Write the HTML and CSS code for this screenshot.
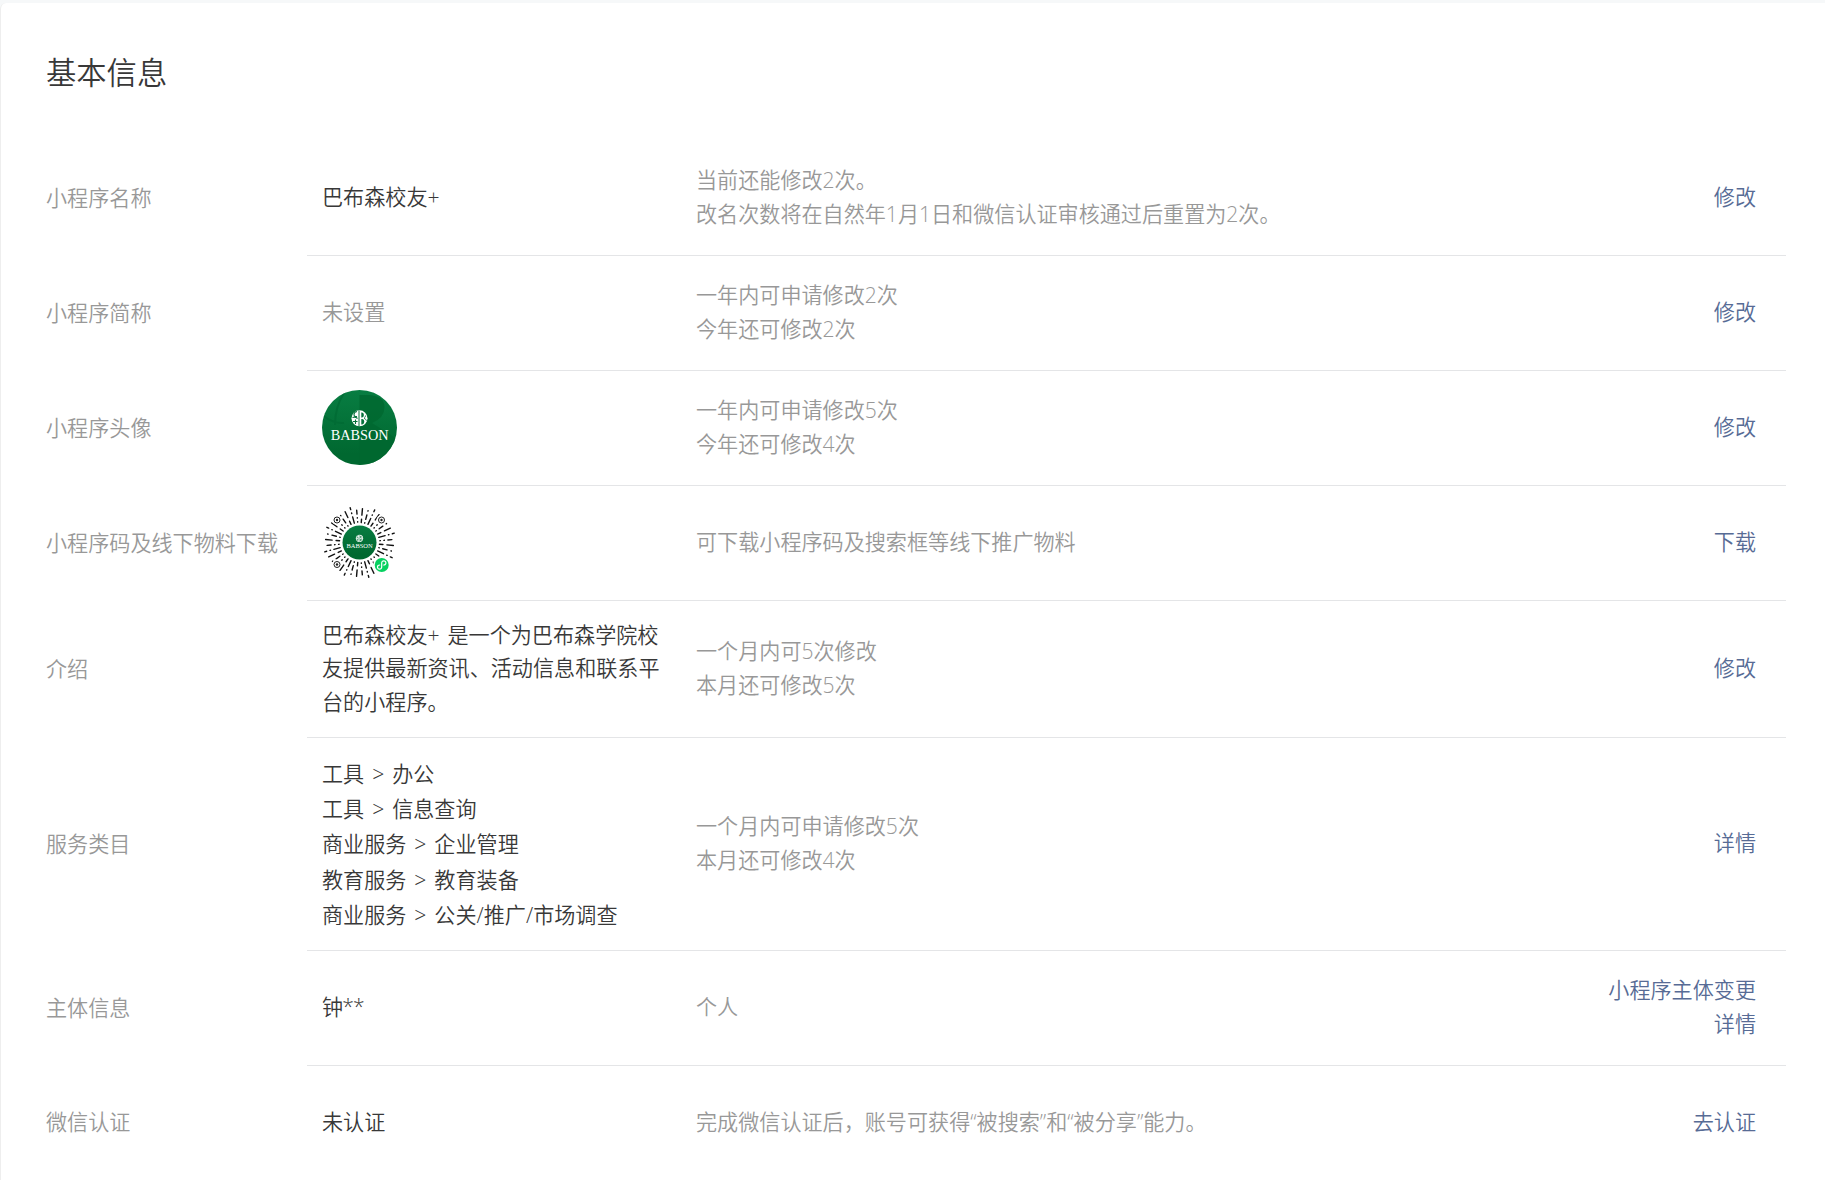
FILE: index.html
```html
<!DOCTYPE html>
<html lang="zh-CN">
<head>
<meta charset="utf-8">
<title>基本信息</title>
<link rel="stylesheet" href="styles.css">
</head>
<body>
<main class="panel">
  <h1 class="title">基本信息</h1>
  <div class="list">
    <div class="row">
      <div class="label">小程序名称</div>
      <div class="body">
        <div class="value">巴布森校友+</div>
        <div class="hint">当前还能修改2次。<br>改名次数将在自然年1月1日和微信认证审核通过后重置为2次。</div>
        <div class="action"><a>修改</a></div>
      </div>
    </div>
    <div class="row">
      <div class="label">小程序简称</div>
      <div class="body">
        <div class="value unset">未设置</div>
        <div class="hint">一年内可申请修改2次<br>今年还可修改2次</div>
        <div class="action"><a>修改</a></div>
      </div>
    </div>
    <div class="row">
      <div class="label">小程序头像</div>
      <div class="body">
        <div class="value">
          <svg class="pic" viewBox="0 0 75 75">
            <defs>
              <linearGradient id="green" x2="0" y2="1">
                <stop offset="0" stop-color="#087d42"/>
                <stop offset=".85" stop-color="#006830"/>
              </linearGradient>
              <clipPath id="round"><circle cx="37.5" cy="37.5" r="37.5"/></clipPath>
              <g id="emblem">
                <circle cx="37.500" cy="28.300" r="8" fill="#fff"/>
                <path d="M37 20.500v15.600" stroke="#04713a" stroke-width="1"/>
                <path d="M35 21.500q-3 .5-3 3t3 2M30.500 27.500q3-1 5 1M31 31.500h4.500M33.500 29.500v4.500" stroke="#04713a" stroke-width="1.100" fill="none"/>
                <path d="M39.300 22.500h.8q1.800.3 1.800 2.500t-1.800 2.500h-.8zM39.300 29h1q2 .4 2 2.700t-2 2.700h-1z" fill="#04713a"/>
                <path d="M43.500 25.500q0 2-1.500 2.800q2 .6 2.500 2.500" stroke="#04713a" stroke-width=".8" fill="none"/>
              </g>
            </defs>
            <g clip-path="url(#round)">
              <rect width="75" height="75" fill="url(#green)"/>
              <path d="M37.500 5h10q15 1 15 12T50 33l25 16V75H37.500z" fill="#006830" opacity=".8"/>
              <path d="M22 3q-9 14-9 32M0 25q12 9 22 8" fill="none" stroke="#006a33" stroke-width="2" opacity=".7"/>
            </g>
            <use href="#emblem"/>
            <text x="8.700" y="49.800" textLength="58" lengthAdjust="spacingAndGlyphs" class="logo-text">BABSON</text>
          </svg>
        </div>
        <div class="hint">一年内可申请修改5次<br>今年还可修改4次</div>
        <div class="action"><a>修改</a></div>
      </div>
    </div>
    <div class="row">
      <div class="label">小程序码及线下物料下载</div>
      <div class="body">
        <div class="value">
          <svg class="pic" viewBox="0 0 75 75">
            <defs>
              <path id="ra" d="M20 0H36" stroke-dasharray="3.500 4 6.500 9"/>
              <path id="rb" d="M20 0H36.500" stroke-dasharray=".5 3.500 4.500 4 .5 3.500"/>
              <path id="rc" d="M20 0H36" stroke-dasharray="6.500 3.500 .5 3.500 2 3"/>
              <path id="rd" d="M20.500 0H35" stroke-dasharray=".5 3.500 .5 3.500 4 3"/>
              <g id="quarter">
                <use href="#ra"/><use href="#rb" transform="rotate(10)"/><use href="#rc" transform="rotate(20)"/>
                <use href="#ra" transform="rotate(30)"/><use href="#rd" transform="rotate(40)"/><use href="#rb" transform="rotate(50)"/>
                <use href="#ra" transform="rotate(60)"/><use href="#rc" transform="rotate(70)"/><use href="#rd" transform="rotate(80)"/>
              </g>
            </defs>
            <g transform="translate(37.500 37.500) rotate(5)" stroke="#111" stroke-width="1.400" stroke-linecap="round" fill="none">
              <use href="#quarter"/><use href="#quarter" transform="rotate(90)"/>
              <use href="#quarter" transform="rotate(180)"/><use href="#quarter" transform="rotate(270)"/>
            </g>
            <g fill="#fff">
              <circle cx="15" cy="15" r="5"/><circle cx="59.500" cy="15" r="5"/><circle cx="15" cy="59.500" r="5"/>
            </g>
            <g fill="#fff" stroke="#222" stroke-width="1">
              <circle cx="15" cy="15" r="3"/><circle cx="59.500" cy="15" r="3"/><circle cx="15" cy="59.500" r="3"/>
            </g>
            <g fill="#222"><circle cx="15" cy="15" r="1.200"/><circle cx="59.500" cy="15" r="1.200"/><circle cx="15" cy="59.500" r="1.200"/></g>
            <circle cx="37.500" cy="37.500" r="17" fill="url(#green)"/>
            <g transform="translate(20.500 20.500) scale(.4533)">
              <use href="#emblem"/>
              <text x="8.700" y="49.800" textLength="58" lengthAdjust="spacingAndGlyphs" class="logo-text">BABSON</text>
            </g>
            <circle cx="59.700" cy="60" r="8.500" fill="#fff"/>
            <circle cx="59.700" cy="60" r="7" fill="#07d160"/>
            <path d="M57.700 60a2.100 2.100 0 1 0 2 2.100v-4.200a2.100 2.100 0 1 1 2 2.100" fill="none" stroke="#fff" stroke-width="1.200" stroke-linecap="round"/>
          </svg>
        </div>
        <div class="hint">可下载小程序码及搜索框等线下推广物料</div>
        <div class="action"><a>下载</a></div>
      </div>
    </div>
    <div class="row intro">
      <div class="label">介绍</div>
      <div class="body">
        <div class="value">巴布森校友+ 是一个为巴布森学院校友提供最新资讯、活动信息和联系平台的小程序。</div>
        <div class="hint">一个月内可5次修改<br>本月还可修改5次</div>
        <div class="action"><a>修改</a></div>
      </div>
    </div>
    <div class="row category">
      <div class="label">服务类目</div>
      <div class="body">
        <div class="value">工具 &gt; 办公<br>工具 &gt; 信息查询<br>商业服务 &gt; 企业管理<br>教育服务 &gt; 教育装备<br>商业服务 &gt; 公关/推广/市场调查</div>
        <div class="hint">一个月内可申请修改5次<br>本月还可修改4次</div>
        <div class="action"><a>详情</a></div>
      </div>
    </div>
    <div class="row">
      <div class="label">主体信息</div>
      <div class="body">
        <div class="value masked">钟**</div>
        <div class="hint">个人</div>
        <div class="action"><a>小程序主体变更</a><a>详情</a></div>
      </div>
    </div>
    <div class="row last">
      <div class="label">微信认证</div>
      <div class="body">
        <div class="value">未认证</div>
        <div class="hint">完成微信认证后，账号可获得“被搜索”和“被分享”能力。</div>
        <div class="action"><a>去认证</a></div>
      </div>
    </div>
  </div>
</main>
</body>
</html>
```
FILE: styles.css
```css
* { box-sizing: border-box; }

body {
  margin: 0;
  padding-top: 3px;
  height: 1180px;
  overflow: hidden;
  background: #f6f8f9;
  color: #383838;
  font-family: "Open Sans", "Noto Sans CJK SC", sans-serif;
  font-weight: 350;
  font-size: 21.100px;
  line-height: 34px;
}

.panel {
  height: 1177px;
  padding: 44px 39px 0 45px;
  background: #fff;
  border-left: 1px solid #eee;
  border-top-left-radius: 6px;
}

.title {
  margin: 0;
  height: 94px;
  font-size: 30.300px;
  font-weight: 350;
  line-height: 51px;
}

.row {
  display: grid;
  grid-template-columns: 261px 1fr;
  align-items: stretch;
  height: 115px;
}

.row.intro { height: 137px; }
.row.category { height: 213px; }

.label {
  display: flex;
  align-items: center;
  padding-bottom: 2px;
  color: #989898;
  white-space: nowrap;
}

.body {
  display: grid;
  grid-template-columns: 374px 1fr auto;
  align-items: center;
  padding: 0 30px 2px 15px;
  border-bottom: 1px solid #e4e5e7;
}

.last .body {
  padding-bottom: 4px;
  border-bottom: 0;
}

.last .label { padding-bottom: 3px; }

.value { padding-right: 33px; }
.intro .value { line-height: 33.600px; }
.category .value {
  padding-top: 2px;
  line-height: 35.300px;
  white-space: nowrap;
}

.intro .value,
.category .value { word-spacing: 2.500px; }

.masked { letter-spacing: -.8px; }

.unset, .hint { color: #989898; }

.action {
  display: flex;
  flex-direction: column;
  align-items: flex-end;
  color: #576b95;
}

.pic {
  display: block;
  width: 75px;
  height: 75px;
}

.logo-text {
  font-family: "Liberation Serif", serif;
  font-size: 15.500px;
  font-weight: 400;
  fill: #fff;
}
```
